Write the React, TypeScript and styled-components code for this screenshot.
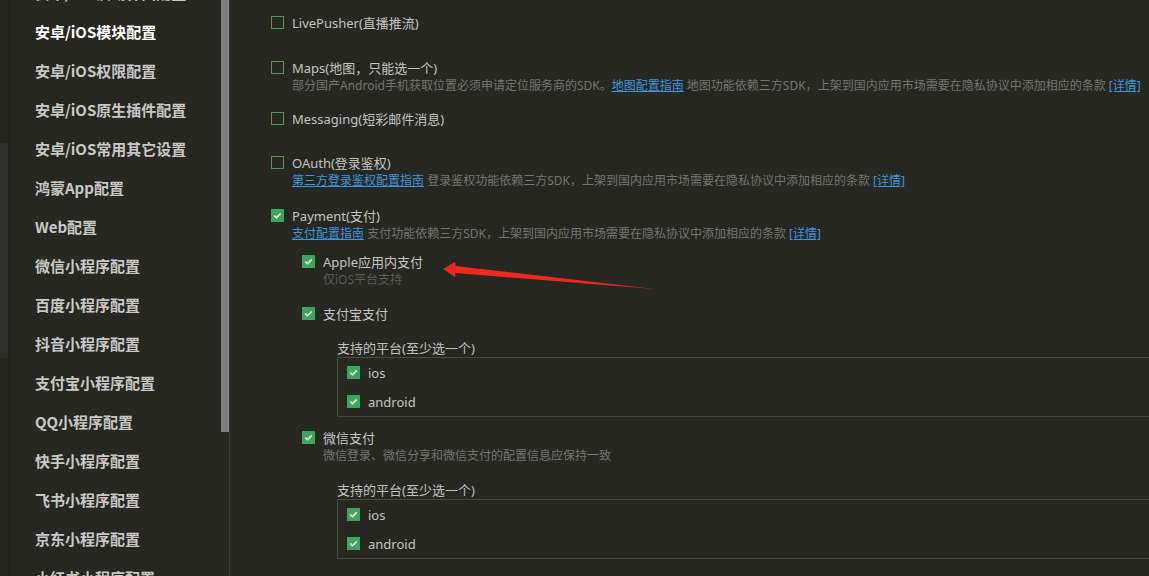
import React from 'react';
import styled, { createGlobalStyle } from 'styled-components';

const GlobalStyle = createGlobalStyle`
  html, body {
    margin: 0;
    padding: 0;
    background: #282823;
  }
  body {
    font-family: 'Noto Sans', 'Noto Sans CJK SC', sans-serif;
  }
`;

const Page = styled.div`
  position: relative;
  display: flex;
  width: 1149px;
  height: 576px;
  overflow: hidden;
  background: #282823;
`;

const EdgeStrip = styled.div`
  width: 9px;
  flex-shrink: 0;
  background: #272722;
  border-right: 1px solid #1d1d1a;
  display: flex;
  flex-direction: column;
`;

const EdgeThumb = styled.div<{ $top: number; $height: number }>`
  margin-top: ${(p) => p.$top}px;
  height: ${(p) => p.$height}px;
  width: 8px;
  background: #2e2e2a;
`;

const Sidebar = styled.nav`
  width: 219px;
  flex-shrink: 0;
  display: flex;
  border-right: 1px solid #3a3a36;
  background: #282823;
`;

const NavList = styled.ul`
  flex: 1;
  list-style: none;
  margin: -27px 0 0;
  padding: 0 0 0 25px;
`;

const NavItem = styled.li<{ $active?: boolean }>`
  height: 39px;
  line-height: 39px;
  font-family: 'Noto Sans CJK SC', sans-serif;
  font-size: 15px;
  font-weight: 700;
  white-space: nowrap;
  color: ${(p) => (p.$active ? '#ffffff' : '#c8c8c6')};
`;

const ScrollTrack = styled.div`
  width: 8px;
  flex-shrink: 0;
`;

const ScrollThumb = styled.div`
  height: 432px;
  background: #808080;
`;

const Main = styled.main`
  flex: 1;
  min-width: 0;
  padding: 12px 0 0 41px;
  overflow: hidden;
`;

const Item = styled.div<{ $mb?: number }>`
  margin-bottom: ${(p) => p.$mb ?? 0}px;
`;

const Row = styled.label`
  display: flex;
  align-items: center;
  gap: 8px;
  height: 20px;
  font-size: 13px;
  color: #c4c4c2;
  white-space: nowrap;
`;

const Box = styled.span<{ $checked?: boolean }>`
  box-sizing: border-box;
  width: 13px;
  height: 13px;
  flex-shrink: 0;
  display: inline-flex;
  align-items: center;
  justify-content: center;
  border: 1px solid ${(p) => (p.$checked ? '#3fa55d' : '#56995f')};
  background: ${(p) => (p.$checked ? '#3fa55d' : 'transparent')};
`;

const Desc = styled.div<{ $dim?: boolean }>`
  margin-left: 21px;
  height: 18px;
  line-height: 18px;
  font-size: 12px;
  white-space: nowrap;
  color: ${(p) => (p.$dim ? '#5d5d5a' : '#757572')};
`;

const DocLink = styled.a`
  color: #3f95dc;
  text-decoration: underline;
`;

const Nested = styled.div<{ $mt?: number }>`
  margin-left: 31px;
  margin-top: ${(p) => p.$mt ?? 0}px;
`;

const PlatformGroup = styled.div<{ $mt: number }>`
  margin: ${(p) => p.$mt}px 0 0 35px;
`;

const GroupTitle = styled.div`
  height: 18px;
  line-height: 18px;
  font-size: 13px;
  color: #c0c0be;
  white-space: nowrap;
`;

const GroupBox = styled.div`
  width: 900px;
  border: 1px solid #4a4a46;
  padding-left: 9px;
`;

const PlatformRow = styled(Row)`
  height: 29px;
`;

const Arrow = styled.svg`
  position: absolute;
  left: 440px;
  top: 258px;
  overflow: visible;
`;

const Check = ({ checked }: { checked?: boolean }) => (
  <Box $checked={checked}>
    {checked && (
      <svg width="11" height="11" viewBox="0 0 11 11">
        <path d="M2.3 5.6 L4.5 7.7 L8.6 3.4" fill="none" stroke="#ffffff" strokeWidth="1.5" />
      </svg>
    )}
  </Box>
);

const terms = '上架到国内应用市场需要在隐私协议中添加相应的条款';

const navItems = [
  '安卓/iOS启动界面配置',
  '安卓/iOS模块配置',
  '安卓/iOS权限配置',
  '安卓/iOS原生插件配置',
  '安卓/iOS常用其它设置',
  '鸿蒙App配置',
  'Web配置',
  '微信小程序配置',
  '百度小程序配置',
  '抖音小程序配置',
  '支付宝小程序配置',
  'QQ小程序配置',
  '快手小程序配置',
  '飞书小程序配置',
  '京东小程序配置',
  '小红书小程序配置',
];

const Platforms = ({ mt }: { mt: number }) => (
  <PlatformGroup $mt={mt}>
    <GroupTitle>支持的平台(至少选一个)</GroupTitle>
    <GroupBox>
      <PlatformRow>
        <Check checked />
        ios
      </PlatformRow>
      <PlatformRow>
        <Check checked />
        android
      </PlatformRow>
    </GroupBox>
  </PlatformGroup>
);

const App = () => {
  return (
    <Page>
      <GlobalStyle />
      <EdgeStrip>
        <EdgeThumb $top={143} $height={215} />
      </EdgeStrip>
      <Sidebar>
        <NavList>
          {navItems.map((name) => (
            <NavItem key={name} $active={name === '安卓/iOS模块配置'}>
              {name}
            </NavItem>
          ))}
        </NavList>
        <ScrollTrack>
          <ScrollThumb />
        </ScrollTrack>
      </Sidebar>

      <Main>
        <Item $mb={25}>
          <Row>
            <Check />
            LivePusher(直播推流)
          </Row>
        </Item>
        <Item $mb={13}>
          <Row>
            <Check />
            Maps(地图，只能选一个)
          </Row>
          <Desc>
            部分国产Android手机获取位置必须申请定位服务商的SDK。<DocLink>地图配置指南</DocLink> 地图功能依赖三方SDK，{terms}{' '}
            <DocLink>[详情]</DocLink>
          </Desc>
        </Item>
        <Item $mb={24}>
          <Row>
            <Check />
            Messaging(短彩邮件消息)
          </Row>
        </Item>
        <Item $mb={15}>
          <Row>
            <Check />
            OAuth(登录鉴权)
          </Row>
          <Desc>
            <DocLink>第三方登录鉴权配置指南</DocLink> 登录鉴权功能依赖三方SDK，{terms} <DocLink>[详情]</DocLink>
          </Desc>
        </Item>
        <Item>
          <Row>
            <Check checked />
            Payment(支付)
          </Row>
          <Desc>
            <DocLink>支付配置指南</DocLink> 支付功能依赖三方SDK，{terms} <DocLink>[详情]</DocLink>
          </Desc>
          <Nested $mt={8}>
            <Item $mb={14}>
              <Row>
                <Check checked />
                Apple应用内支付
              </Row>
              <Desc $dim>仅iOS平台支持</Desc>
            </Item>
            <Item $mb={10}>
              <Row>
                <Check checked />
                支付宝支付
              </Row>
              <Platforms mt={16} />
            </Item>
            <Item>
              <Row>
                <Check checked />
                微信支付
              </Row>
              <Desc>微信登录、微信分享和微信支付的配置信息应保持一致</Desc>
              <Platforms mt={16} />
            </Item>
          </Nested>
        </Item>
      </Main>

      <Arrow width="220" height="36" viewBox="0 0 220 36">
        <path d="M3 11 L15 4 L15.5 8 L214 31 L15.5 15 L15 19 Z" fill="#ee2a1e" />
      </Arrow>
    </Page>
  );
};

export default App;
